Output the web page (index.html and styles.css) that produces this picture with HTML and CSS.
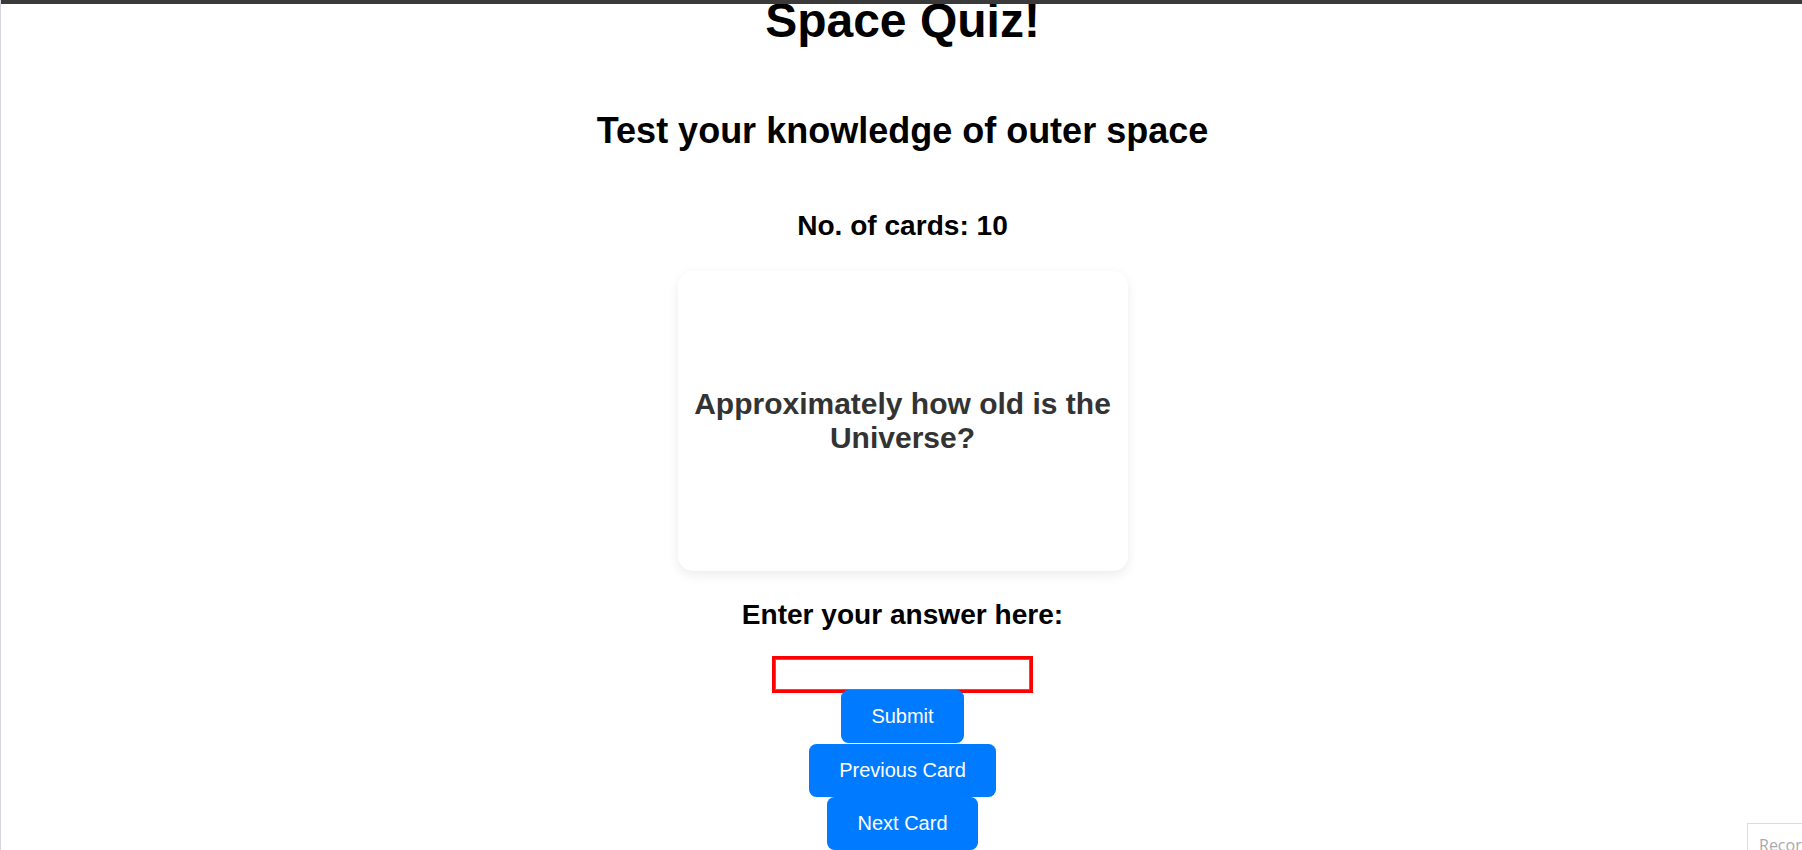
FILE: index.html
```html
<!DOCTYPE html>
<html lang="en">
<head>
<meta charset="utf-8">
<title>Space Quiz!</title>
<link rel="stylesheet" href="styles.css">
</head>
<body>
<div class="topbar"></div>
<div class="leftline"></div>
<main class="app">
  <h1 class="title">Space Quiz!</h1>
  <h2 class="subtitle">Test your knowledge of outer space</h2>
  <h3 class="count">No. of cards: 10</h3>
  <div class="card">
    <p class="question">Approximately how old is the Universe?</p>
  </div>
  <h3 class="prompt">Enter your answer here:</h3>
  <input class="answer" type="text">
  <button class="btn btn-submit">Submit</button>
  <button class="btn btn-prev">Previous Card</button>
  <button class="btn btn-next">Next Card</button>
</main>
<div class="recorder">Record</div>
</body>
</html>
```

FILE: styles.css
```css
html, body {
  margin: 0;
  padding: 0;
  height: 850px;
  overflow: hidden;
  background: #ffffff;
  font-family: "Liberation Sans", Arial, sans-serif;
}

.topbar {
  position: fixed;
  top: 0;
  left: 0;
  right: 0;
  height: 4px;
  background: #3a3a3a;
  z-index: 10;
}

.leftline {
  position: fixed;
  top: 0;
  bottom: 0;
  left: 0;
  width: 1px;
  background: #d4d4dc;
  z-index: 10;
}

.app {
  display: flex;
  flex-direction: column;
  align-items: center;
  padding-left: 3px;
}

.title {
  font-size: 48px;
  font-weight: bold;
  color: #000;
  margin: -7px 0 32.16px;
}

.subtitle {
  font-size: 36px;
  font-weight: bold;
  color: #000;
  margin: 29.9px 0 29.9px;
}

.count,
.prompt {
  font-size: 28.08px;
  font-weight: bold;
  color: #000;
  margin: 28.08px 0 28.08px;
}

.count {
  margin-bottom: 28.5px;
}

.prompt {
  margin-bottom: 25.5px;
}

.card {
  box-sizing: border-box;
  width: 450px;
  height: 300px;
  padding: 15px;
  display: flex;
  align-items: center;
  justify-content: center;
  background: #fff;
  border-radius: 15px;
  box-shadow: 0 4px 12px rgba(0, 0, 0, 0.08);
}

.question {
  margin: 0;
  font-size: 30px;
  font-weight: bold;
  color: #333;
  text-align: center;
}

.answer {
  box-sizing: border-box;
  width: 261px;
  height: 37px;
  margin: 0;
  padding: 2px 4px;
  border: 3px solid #ff0000;
  box-shadow: inset 0 0 0 1px #767676;
  background: #fff;
  font-family: "Liberation Sans", Arial, sans-serif;
  font-size: 20px;
  outline: none;
}

.btn {
  display: block;
  box-sizing: border-box;
  height: 53px;
  margin: 0;
  padding: 15px 30px;
  border: none;
  border-radius: 7.5px;
  background: #007bff;
  color: #fff;
  font-family: "Liberation Sans", Arial, sans-serif;
  font-size: 20px;
  line-height: 23px;
  position: relative;
}

.btn-submit {
  margin-top: -3px;
}

.btn-prev {
  margin-top: 1px;
}

.recorder {
  position: fixed;
  left: 1747px;
  top: 823px;
  width: 80px;
  height: 40px;
  box-sizing: border-box;
  border: 1px solid #dddddd;
  background: #fff;
  padding: 10px 0 0 11px;
  font-family: "Open Sans", sans-serif;
  font-size: 16px;
  color: #aaaaaa;
  white-space: nowrap;
  overflow: hidden;
}
```
